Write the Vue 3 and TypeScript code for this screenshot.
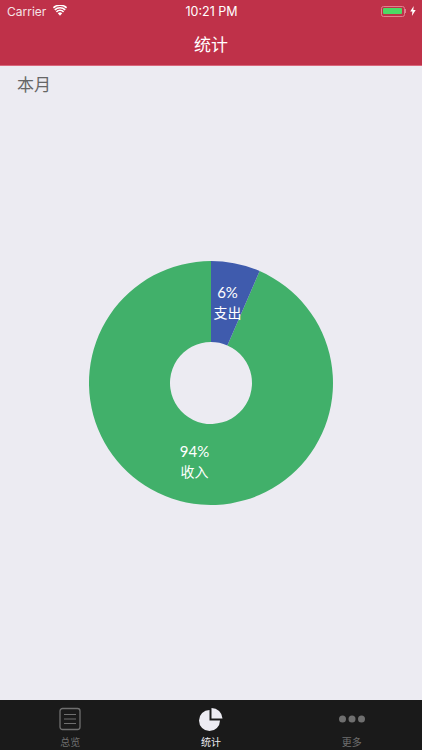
<script setup lang="ts">
import { computed } from 'vue'

const cx = 122
const cy = 122
const outer = 122
const inner = 41
const expenseAngle = 23.5

function point(r: number, deg: number): string {
  const a = (deg * Math.PI) / 180
  return `${(cx + r * Math.sin(a)).toFixed(2)} ${(cy - r * Math.cos(a)).toFixed(2)}`
}

function slice(from: number, to: number): string {
  const large = to - from > 180 ? 1 : 0
  return `M${point(outer, from)} A${outer} ${outer} 0 ${large} 1 ${point(outer, to)} L${point(inner, to)} A${inner} ${inner} 0 ${large} 0 ${point(inner, from)} Z`
}

const expensePath = computed(() => slice(0, expenseAngle))
const incomePath = computed(() => slice(expenseAngle, 360))

const tabs = [
  { key: 'overview', label: '总览', active: false },
  { key: 'stats', label: '统计', active: true },
  { key: 'more', label: '更多', active: false },
]
</script>

<template>
  <div class="app">
    <header class="header">
      <div class="status">
        <div class="status-left">
          <span>Carrier</span>
          <svg class="wifi" viewBox="0 0 14 11" width="14" height="11">
            <path d="M7 10.8 4.8 8.2a3.2 3.2 0 0 1 4.4 0Z" fill="#fff" />
            <path d="M3.4 6.8a5.2 5.2 0 0 1 7.2 0" fill="none" stroke="#fff" stroke-width="1.6" />
            <path d="M1.8 4.8a7.6 7.6 0 0 1 10.4 0" fill="none" stroke="#fff" stroke-width="1.6" />
            <path d="M.4 2.8a9.8 9.8 0 0 1 13.2 0" fill="none" stroke="#fff" stroke-width="1.6" />
          </svg>
        </div>
        <span class="clock">10:21 PM</span>
        <div class="status-right">
          <div class="battery"><div class="battery-fill"></div></div>
          <div class="battery-cap"></div>
          <svg class="bolt" viewBox="0 0 6 10" width="6" height="10">
            <path d="M3.7 0 .2 5.6h2.2L1.9 10l3.8-6H3.3Z" fill="#fff" />
          </svg>
        </div>
      </div>
      <h1 class="title">统计</h1>
    </header>

    <main class="main">
      <div class="period">本月</div>
      <div class="chart-wrap">
        <svg class="chart" viewBox="0 0 244 244" width="244" height="244">
          <path :d="incomePath" fill="#41b06a" />
          <path :d="expensePath" fill="#3f5bad" />
          <text x="138.5" y="37" class="pct">6%</text>
          <text x="138.5" y="56.5" class="name">支出</text>
          <text x="105.5" y="196" class="pct">94%</text>
          <text x="105.5" y="215.5" class="name">收入</text>
        </svg>
      </div>
    </main>

    <nav class="tabbar">
      <div v-for="tab in tabs" :key="tab.key" class="tab" :class="{ active: tab.active }">
        <svg v-if="tab.key === 'overview'" class="icon" viewBox="0 0 24 24" width="24" height="24">
          <rect x="2" y="1.5" width="20" height="21" rx="2.5" fill="none" stroke="#6f6f6f" stroke-width="1.3" />
          <path d="M6 7.5h12M6 12h12M6 16.5h12" stroke="#6f6f6f" stroke-width="1.2" fill="none" />
        </svg>
        <svg v-else-if="tab.key === 'stats'" class="icon" viewBox="0 0 24 24" width="24" height="24">
          <path d="M10.5 3v10.5H21A10.5 10.5 0 1 1 10.5 3Z" fill="#ecebf2" />
          <path d="M12.5 1A11 11 0 0 1 23.5 11.5h-11Z" fill="#ecebf2" />
        </svg>
        <svg v-else class="icon" viewBox="0 0 26 24" width="26" height="24">
          <circle cx="3.5" cy="12" r="3.5" fill="#6f6f6f" />
          <circle cx="13" cy="12" r="3.5" fill="#6f6f6f" />
          <circle cx="22.5" cy="12" r="3.5" fill="#6f6f6f" />
        </svg>
        <span class="tab-label">{{ tab.label }}</span>
      </div>
    </nav>
  </div>
</template>

<style scoped>
.app {
  display: flex;
  flex-direction: column;
  width: 422px;
  height: 750px;
  overflow: hidden;
  background: #ecebf2;
  font-family: Inter, "Noto Sans CJK SC", sans-serif;
}
.header {
  display: flex;
  flex-direction: column;
  height: 66px;
  box-sizing: border-box;
  background: #bf3149;
  border-bottom: 1px solid #d9667b;
  color: #fff;
}
.status {
  display: grid;
  grid-template-columns: 1fr auto 1fr;
  align-items: center;
  height: 22px;
  padding: 0 6px 0 7px;
  font-size: 12px;
  color: #f5e3e6;
}
.status-left {
  display: flex;
  align-items: center;
  gap: 7px;
}
.wifi {
  margin-top: -2px;
}
.clock {
  font-size: 12.5px;
  font-weight: 400;
  color: #fff;
}
.status-right {
  display: flex;
  align-items: center;
  justify-content: flex-end;
}
.battery {
  width: 24px;
  height: 11px;
  box-sizing: border-box;
  padding: 1.5px;
  border: 1px solid #e0808f;
  border-radius: 2.5px;
}
.battery-fill {
  height: 100%;
  background: #4cd964;
  border-radius: 1px;
}
.battery-cap {
  width: 1.5px;
  height: 4px;
  margin-right: 4px;
  background: #e0808f;
}
.title {
  margin: 0;
  padding-top: 2px;
  font-size: 17px;
  line-height: 40px;
  font-weight: 400;
  text-align: center;
  font-family: "Noto Sans CJK SC", sans-serif;
}
.main {
  flex: 1;
  display: flex;
  flex-direction: column;
  min-height: 0;
}
.period {
  height: 38px;
  padding: 5px 0 0 17px;
  box-sizing: border-box;
  font-size: 17px;
  line-height: 26px;
  color: #666;
  font-family: "Noto Sans CJK SC", sans-serif;
}
.chart-wrap {
  flex: 1;
  display: flex;
  align-items: center;
  justify-content: center;
  padding-bottom: 38px;
}
.chart text {
  fill: #fff;
  text-anchor: middle;
  font-size: 14px;
}
.chart .pct {
  font-family: Lato, "Noto Sans", sans-serif;
  font-size: 15px;
}
.chart .name {
  font-family: "Noto Sans CJK SC", sans-serif;
}
.tabbar {
  display: grid;
  grid-template-columns: repeat(3, 1fr);
  height: 50px;
  background: #1a1a1a;
}
.tab {
  display: flex;
  flex-direction: column;
  align-items: center;
  padding-top: 7px;
  color: #6f6f6f;
}
.tab.active {
  color: #ecebf2;
}
.tab-label {
  margin-top: 4px;
  font-size: 10px;
  line-height: 14px;
  font-family: "Noto Sans CJK SC", sans-serif;
}
</style>
